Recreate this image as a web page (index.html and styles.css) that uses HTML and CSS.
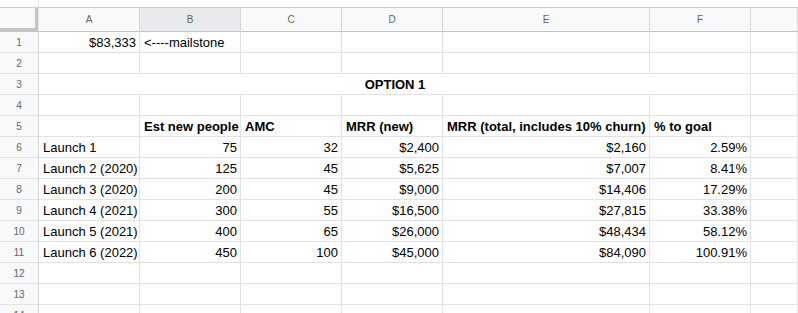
FILE: index.html
```html
<!DOCTYPE html>
<html>
<head>
<meta charset="utf-8">
<link rel="stylesheet" href="styles.css">
</head>
<body>
<div class="sheet">
  <div class="row strip">
    <div class="c rn"><span class="ghost">9</span></div>
    <div class="c blank"></div>
  </div>
  <div class="row head">
    <div class="h corner"></div>
    <div class="h">A</div>
    <div class="h sel">B</div>
    <div class="h">C</div>
    <div class="h">D</div>
    <div class="h">E</div>
    <div class="h">F</div>
    <div class="h"></div>
  </div>
  <div class="row">
    <div class="c rn">1</div>
    <div class="c r">$83,333</div>
    <div class="c">&lt;----mailstone</div>
    <div class="c"></div><div class="c"></div><div class="c"></div><div class="c"></div><div class="c"></div>
  </div>
  <div class="row">
    <div class="c rn">2</div>
    <div class="c"></div><div class="c"></div><div class="c"></div><div class="c"></div><div class="c"></div><div class="c"></div><div class="c"></div>
  </div>
  <div class="row">
    <div class="c rn">3</div>
    <div class="c b ctr merged">OPTION 1</div>
    <div class="c"></div>
  </div>
  <div class="row">
    <div class="c rn">4</div>
    <div class="c"></div><div class="c"></div><div class="c"></div><div class="c"></div><div class="c"></div><div class="c"></div><div class="c"></div>
  </div>
  <div class="row">
    <div class="c rn">5</div>
    <div class="c"></div>
    <div class="c b">Est new people</div>
    <div class="c b">AMC</div>
    <div class="c b">MRR (new)</div>
    <div class="c b">MRR (total, includes 10% churn)</div>
    <div class="c b">% to goal</div>
    <div class="c"></div>
  </div>
  <div class="row">
    <div class="c rn">6</div>
    <div class="c">Launch 1</div>
    <div class="c r">75</div>
    <div class="c r">32</div>
    <div class="c r">$2,400</div>
    <div class="c r">$2,160</div>
    <div class="c r">2.59%</div>
    <div class="c"></div>
  </div>
  <div class="row">
    <div class="c rn">7</div>
    <div class="c">Launch 2 (2020)</div>
    <div class="c r">125</div>
    <div class="c r">45</div>
    <div class="c r">$5,625</div>
    <div class="c r">$7,007</div>
    <div class="c r">8.41%</div>
    <div class="c"></div>
  </div>
  <div class="row">
    <div class="c rn">8</div>
    <div class="c">Launch 3 (2020)</div>
    <div class="c r">200</div>
    <div class="c r">45</div>
    <div class="c r">$9,000</div>
    <div class="c r">$14,406</div>
    <div class="c r">17.29%</div>
    <div class="c"></div>
  </div>
  <div class="row">
    <div class="c rn">9</div>
    <div class="c">Launch 4 (2021)</div>
    <div class="c r">300</div>
    <div class="c r">55</div>
    <div class="c r">$16,500</div>
    <div class="c r">$27,815</div>
    <div class="c r">33.38%</div>
    <div class="c"></div>
  </div>
  <div class="row">
    <div class="c rn">10</div>
    <div class="c">Launch 5 (2021)</div>
    <div class="c r">400</div>
    <div class="c r">65</div>
    <div class="c r">$26,000</div>
    <div class="c r">$48,434</div>
    <div class="c r">58.12%</div>
    <div class="c"></div>
  </div>
  <div class="row">
    <div class="c rn">11</div>
    <div class="c">Launch 6 (2022)</div>
    <div class="c r">450</div>
    <div class="c r">100</div>
    <div class="c r">$45,000</div>
    <div class="c r">$84,090</div>
    <div class="c r">100.91%</div>
    <div class="c"></div>
  </div>
  <div class="row">
    <div class="c rn">12</div>
    <div class="c"></div><div class="c"></div><div class="c"></div><div class="c"></div><div class="c"></div><div class="c"></div><div class="c"></div>
  </div>
  <div class="row">
    <div class="c rn">13</div>
    <div class="c"></div><div class="c"></div><div class="c"></div><div class="c"></div><div class="c"></div><div class="c"></div><div class="c"></div>
  </div>
  <div class="row">
    <div class="c rn">14</div>
    <div class="c"></div><div class="c"></div><div class="c"></div><div class="c"></div><div class="c"></div><div class="c"></div><div class="c"></div>
  </div>
</div>
</body>
</html>
```
FILE: styles.css
```css
html, body {
  margin: 0;
  padding: 0;
  background: #fff;
  overflow: hidden;
}
body {
  width: 798px;
  height: 313px;
  font-family: "Liberation Sans", Arial, sans-serif;
  font-size: 13px;
  color: #000;
}
.sheet {
  width: 798px;
}
.row {
  display: grid;
  grid-template-columns: 39px 101px 101px 101px 101px 207px 101px 1fr;
}
.c {
  box-sizing: border-box;
  height: 21px;
  border-right: 1px solid #e2e2e2;
  border-bottom: 1px solid #e2e2e2;
  padding: 3px 3px 0 4px;
  line-height: 16px;
  white-space: nowrap;
  overflow: hidden;
}
.r { text-align: right; }
.b { font-weight: bold; }
.ctr { text-align: center; }
.merged { grid-column: 2 / 8; }
.rn {
  background: #f8f9fa;
  border-right-color: #d6d6d6;
  color: #666;
  font-size: 10px;
  text-align: center;
  padding: 2px 0 0 0;
  line-height: 18px;
}
.strip .c {
  height: 7px;
  border-bottom: none;
  padding: 0;
  background: #fff;
}
.strip .rn {
  border-right-color: #e2e2e2;
  position: relative;
}
.strip .blank {
  grid-column: 2 / 9;
  border-right: none;
}
.ghost {
  position: absolute;
  left: 3px;
  top: -9px;
  font-size: 10px;
  line-height: 12px;
  color: #bbb;
}
.h {
  box-sizing: border-box;
  height: 25px;
  background: #f8f9fa;
  border-top: 1px solid #cfcfcf;
  border-bottom: 1px solid #c4c4c4;
  border-right: 1px solid #d6d6d6;
  color: #666;
  font-size: 10px;
  text-align: center;
  line-height: 23px;
}
.h.sel {
  background: #e8eaed;
}
.corner {
  box-shadow: inset -3px -3px 0 #c6c6c6;
  border-right-color: #e2e2e2;
}
```
